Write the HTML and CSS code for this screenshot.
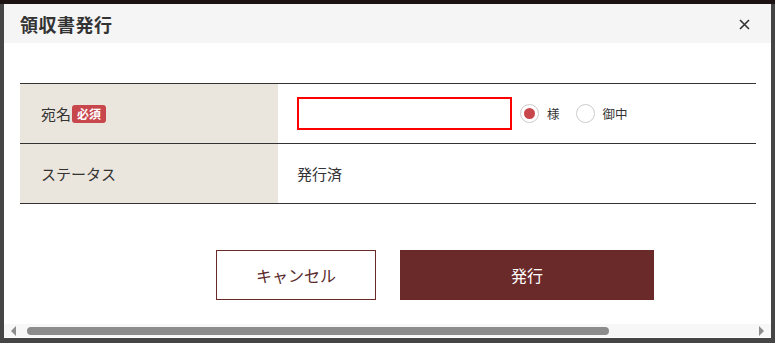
FILE: index.html
```html
<!DOCTYPE html>
<html lang="ja">
<head>
  <meta charset="UTF-8">
  <meta name="viewport" content="width=device-width, initial-scale=1.0">
  <title>領収書発行</title>
  <link rel="stylesheet" href="styles.css">
</head>
<body>
  <div class="dialog">
    <div class="dialog-header">
      <h1>領収書発行</h1>
      <button class="close" aria-label="閉じる">
        <svg width="11" height="11" viewBox="0 0 11 11"><path d="M1 1L10 10M10 1L1 10" stroke="#333" stroke-width="1.6" fill="none"/></svg>
      </button>
    </div>

    <div class="dialog-body">
      <table class="form-table">
        <tr>
          <th>宛名<span class="required">必須</span></th>
          <td>
            <div class="name-row">
              <input type="text" class="name-input">
              <label class="radio"><input type="radio" name="suffix" checked><span class="mark"></span>様</label>
              <label class="radio"><input type="radio" name="suffix"><span class="mark"></span>御中</label>
            </div>
          </td>
        </tr>
        <tr>
          <th>ステータス</th>
          <td>発行済</td>
        </tr>
      </table>

      <div class="actions">
        <button class="btn-cancel">キャンセル</button>
        <button class="btn-issue">発行</button>
      </div>
    </div>

    <div class="hscroll">
      <span class="arrow left"></span>
      <div class="track"><div class="thumb"></div></div>
      <span class="arrow right"></span>
    </div>
  </div>
</body>
</html>
```

FILE: styles.css
```css
body {
  margin: 0;
  background-color: #454545;
  border-top: 4px solid #1d1212;
  font-family: "Noto Sans CJK JP", "Noto Sans", sans-serif;
  color: #333;
  height: 339px;
  overflow: hidden;
}

.dialog {
  margin: 0 4px 0 4px;
  width: 767px;
  background-color: #fff;
  height: 334px;
  display: flex;
  flex-direction: column;
}

.dialog-header {
  height: 39px;
  background-color: #f5f5f5;
  display: flex;
  align-items: center;
  justify-content: space-between;
  padding: 0 16px;
}
.dialog-header h1 {
  margin: 0;
  font-size: 18px;
  font-weight: bold;
  color: #333;
  letter-spacing: 0.5px;
}
.close {
  background: none;
  border: none;
  padding: 0;
  margin: 2px 5px 0 0;
  display: flex;
  cursor: pointer;
}

.dialog-body {
  flex: 1;
  padding: 40px 15px 0 16px;
}

.form-table {
  width: 100%;
  border-collapse: collapse;
  border-top: 1px solid #333;
}
.form-table tr {
  border-bottom: 1px solid #333;
  height: 60px;
}
.form-table th {
  width: 237px;
  background-color: #ebe6dd;
  text-align: left;
  font-weight: normal;
  font-size: 15px;
  padding: 0 0 0 21px;
  color: #333;
}
.form-table td {
  padding: 0 0 0 19px;
  font-size: 15px;
  color: #333;
}

.required {
  display: inline-block;
  background-color: #c8474d;
  color: #fff;
  font-size: 12px;
  font-weight: bold;
  line-height: 18px;
  padding: 0 5px;
  border-radius: 3px;
  margin-left: 1px;
  vertical-align: 1px;
}

.name-row {
  display: flex;
  align-items: center;
}
.name-input {
  box-sizing: border-box;
  width: 215px;
  height: 33px;
  border: 2px solid #f00;
  outline: none;
  margin: 0;
}

.radio {
  display: flex;
  align-items: center;
  font-size: 12.5px;
  color: #333;
  margin-left: 8px;
  cursor: pointer;
}
.radio + .radio {
  margin-left: 16px;
}
.radio input {
  display: none;
}
.radio .mark {
  box-sizing: border-box;
  width: 19px;
  height: 19px;
  border: 1px solid #ccc;
  border-radius: 50%;
  margin-right: 8px;
  position: relative;
}
.radio input:checked + .mark:after {
  content: "";
  position: absolute;
  top: 3px;
  left: 3px;
  width: 11px;
  height: 11px;
  border-radius: 50%;
  background-color: #c8474d;
}

.actions {
  display: flex;
  gap: 24px;
  margin: 46px 0 0 196px;
}
.actions button {
  height: 50px;
  font-family: inherit;
  font-size: 16px;
  cursor: pointer;
}
.btn-cancel {
  width: 160px;
  background-color: #fff;
  border: 1px solid #6b2a2a;
  color: #5a2a2a;
}
.btn-issue {
  width: 254px;
  background-color: #6b2a2a;
  border: none;
  color: #fff;
}

.hscroll {
  height: 13px;
  background-color: #f7f7f7;
  display: flex;
  align-items: center;
  margin-bottom: 1px;
}
.hscroll .track {
  flex: 1;
  height: 8px;
}
.hscroll .thumb {
  width: 582px;
  height: 8px;
  margin-left: 11px;
  background-color: #8c8c8c;
  border-radius: 4px;
}
.arrow {
  width: 0;
  height: 0;
  border-top: 5px solid transparent;
  border-bottom: 5px solid transparent;
}
.arrow.left {
  border-right: 5px solid #8c8c8c;
  margin: 0 0 0 7px;
}
.arrow.right {
  border-left: 5px solid #8c8c8c;
  margin: 0 7px 0 0;
}
```
